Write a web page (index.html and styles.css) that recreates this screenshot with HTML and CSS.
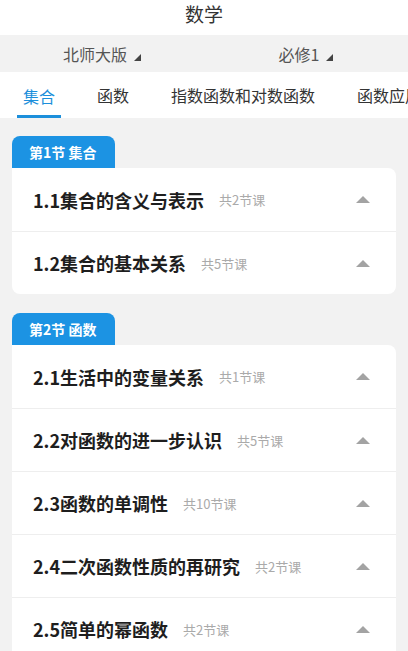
FILE: index.html
```html
<!DOCTYPE html>
<html lang="zh-CN">
<head>
    <meta charset="UTF-8">
    <meta name="viewport" content="width=device-width, initial-scale=1.0">
    <title>数学</title>
    <link rel="stylesheet" href="styles.css">
</head>
<body>

    <div class="title-bar">数学</div>

    <!-- 教材版本选择 -->
    <div class="filter-bar">
        <div class="filter-item">北师大版<span class="corner"></span></div>
        <div class="filter-item">必修1<span class="corner"></span></div>
    </div>

    <div class="tabs">
        <div class="tab active">集合</div>
        <div class="tab">函数</div>
        <div class="tab">指数函数和对数函数</div>
        <div class="tab">函数应用</div>
    </div>

    <div class="content">
        <div class="section">
            <div class="section-tag">第1节 集合</div>
            <div class="card">
                <div class="row">
                    <span class="row-title">1.1集合的含义与表示</span>
                    <span class="row-count">共2节课</span>
                    <span class="arrow"></span>
                </div>
                <div class="row">
                    <span class="row-title">1.2集合的基本关系</span>
                    <span class="row-count">共5节课</span>
                    <span class="arrow"></span>
                </div>
            </div>
        </div>

        <div class="section">
            <div class="section-tag">第2节 函数</div>
            <div class="card">
                <div class="row">
                    <span class="row-title">2.1生活中的变量关系</span>
                    <span class="row-count">共1节课</span>
                    <span class="arrow"></span>
                </div>
                <div class="row">
                    <span class="row-title">2.2对函数的进一步认识</span>
                    <span class="row-count">共5节课</span>
                    <span class="arrow"></span>
                </div>
                <div class="row">
                    <span class="row-title">2.3函数的单调性</span>
                    <span class="row-count">共10节课</span>
                    <span class="arrow"></span>
                </div>
                <div class="row">
                    <span class="row-title">2.4二次函数性质的再研究</span>
                    <span class="row-count">共2节课</span>
                    <span class="arrow"></span>
                </div>
                <div class="row">
                    <span class="row-title">2.5简单的幂函数</span>
                    <span class="row-count">共2节课</span>
                    <span class="arrow"></span>
                </div>
            </div>
        </div>
    </div>

</body>
</html>
```

FILE: styles.css
```css
body {
    margin: 0;
    font-family: "Noto Sans CJK SC", "Noto Sans", sans-serif;
    background-color: #f2f2f2;
    color: #333;
    overflow: hidden;
}
.title-bar {
    height: 35px;
    padding-top: 1px;
    line-height: 26px;
    text-align: center;
    font-size: 19px;
    color: #333;
    background-color: #fff;
    box-sizing: border-box;
}
.filter-bar {
    display: flex;
    height: 37px;
    background-color: #f2f2f2;
}
.filter-item {
    flex: 1;
    display: flex;
    align-items: center;
    justify-content: center;
    font-size: 16px;
    color: #555;
}
.corner {
    width: 0;
    height: 0;
    margin-left: 7px;
    margin-top: 8px;
    border-left: 7px solid transparent;
    border-bottom: 7px solid #444;
}
.tabs {
    display: flex;
    gap: 30px;
    height: 46px;
    padding-left: 17px;
    background-color: #fff;
    white-space: nowrap;
    overflow: hidden;
}
.tab {
    flex-shrink: 0;
    padding: 0 6px;
    line-height: 46px;
    font-size: 16px;
    color: #333;
    box-sizing: border-box;
    height: 46px;
}
.tab.active {
    color: #1c8fdb;
    border-bottom: 3px solid #1c8fdb;
    line-height: 48px;
}
.content {
    padding: 18px 12px 0;
}
.section {
    margin-bottom: 19px;
}
.section-tag {
    display: inline-block;
    height: 32px;
    line-height: 32px;
    padding: 0 19px 0 17px;
    font-size: 14px;
    font-weight: bold;
    color: #fff;
    background-color: #1c93e3;
    border-radius: 8px 8px 0 0;
}
.card {
    background-color: #fff;
    border-radius: 0 8px 8px 8px;
}
.row {
    display: flex;
    align-items: center;
    height: 63px;
    padding: 0 26px 0 21px;
    border-top: 1px solid #eeeeee;
    box-sizing: border-box;
}
.row:first-child {
    border-top: none;
}
.row-title {
    font-size: 18px;
    font-weight: bold;
    color: #1e1e1e;
}
.row-count {
    margin-left: 15px;
    font-size: 13px;
    color: #aaa;
}
.arrow {
    margin-left: auto;
    width: 0;
    height: 0;
    border-left: 7px solid transparent;
    border-right: 7px solid transparent;
    border-bottom: 7px solid #a3a3a3;
}
```
